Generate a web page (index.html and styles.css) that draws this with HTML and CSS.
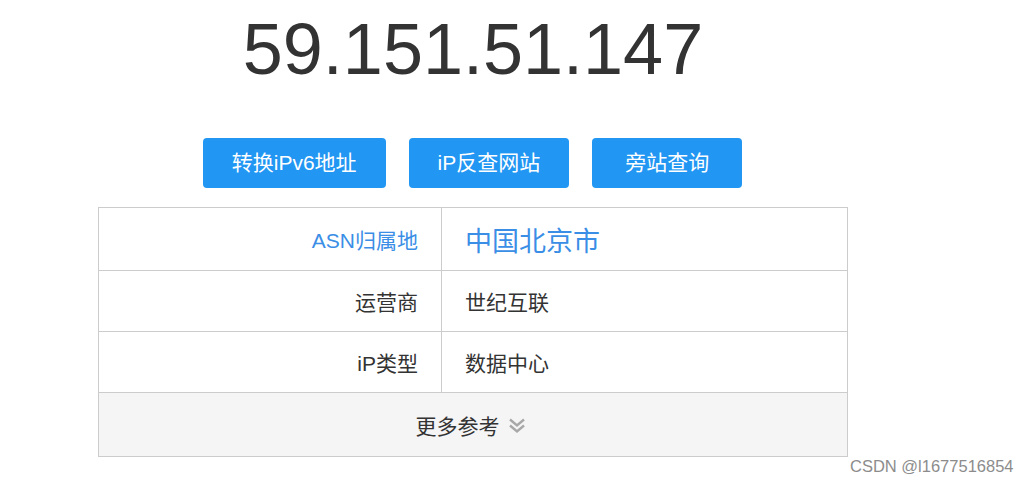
FILE: index.html
```html
<!DOCTYPE html>
<html lang="zh-CN">
<head>
<meta charset="utf-8">
<title>IP</title>
<link rel="stylesheet" href="styles.css">
</head>
<body>
<div class="page">
  <h1 class="ip">59.151.51.147</h1>
  <div class="actions">
    <a class="btn">转换iPv6地址</a>
    <a class="btn">iP反查网站</a>
    <a class="btn">旁站查询</a>
  </div>
  <div class="info">
    <div class="row">
      <div class="label blue">ASN归属地</div>
      <div class="value big blue">中国北京市</div>
    </div>
    <div class="row">
      <div class="label">运营商</div>
      <div class="value">世纪互联</div>
    </div>
    <div class="row">
      <div class="label">iP类型</div>
      <div class="value">数据中心</div>
    </div>
    <div class="more">
      <span>更多参考</span>
      <svg class="chev" width="18" height="16" viewBox="0 0 18 16" aria-hidden="true">
        <path d="M2 1.5 L9 7.5 L16 1.5" fill="none" stroke="#a8a8a8" stroke-width="2.4"/>
        <path d="M2 7.5 L9 13.5 L16 7.5" fill="none" stroke="#a8a8a8" stroke-width="2.4"/>
      </svg>
    </div>
  </div>
</div>
<div class="watermark">CSDN @l1677516854</div>
</body>
</html>
```

FILE: styles.css
```css
html, body {
  margin: 0;
  padding: 0;
  background: #fff;
}
body {
  font-family: "Liberation Sans", Arial, "Noto Sans CJK SC", sans-serif;
  color: #333;
  width: 1032px;
  height: 483px;
  overflow: hidden;
  position: relative;
}
.page {
  width: 946px;
  display: flex;
  flex-direction: column;
  align-items: center;
}
.ip {
  margin: 13px 0 0;
  font-size: 72px;
  line-height: 72px;
  font-weight: normal;
  color: #333;
}
.actions {
  margin-top: 53px;
  display: flex;
  gap: 23px;
  margin-left: -1px;
}
.btn {
  display: block;
  box-sizing: border-box;
  min-width: 150px;
  height: 50px;
  line-height: 50px;
  padding: 0 29px;
  text-align: center;
  background: #2196f3;
  color: #fff;
  font-size: 21px;
  border-radius: 4px;
}
.info {
  margin-top: 19px;
  width: 750px;
  box-sizing: border-box;
  border: 1px solid #cccccc;
}
.row {
  display: grid;
  grid-template-columns: 343px 1fr;
  height: 62px;
  border-bottom: 1px solid #cccccc;
}
.row + .row {
  height: 60px;
}
.label {
  border-right: 1px solid #cccccc;
  display: flex;
  align-items: center;
  justify-content: flex-end;
  padding-right: 23px;
  font-size: 21px;
}
.value {
  display: flex;
  align-items: center;
  padding-left: 23px;
  font-size: 21px;
}
.blue {
  color: #3a8ee6;
}
.big {
  font-size: 27px;
}
.more {
  height: 63px;
  background: #f5f5f5;
  display: flex;
  align-items: center;
  justify-content: center;
  gap: 8px;
  font-size: 21px;
  padding-right: 5px;
}
.chev {
  display: block;
  margin-top: 2px;
}
.watermark {
  position: absolute;
  left: 850px;
  top: 457px;
  font-size: 16.5px;
  color: #8c8c8c;
}
```
